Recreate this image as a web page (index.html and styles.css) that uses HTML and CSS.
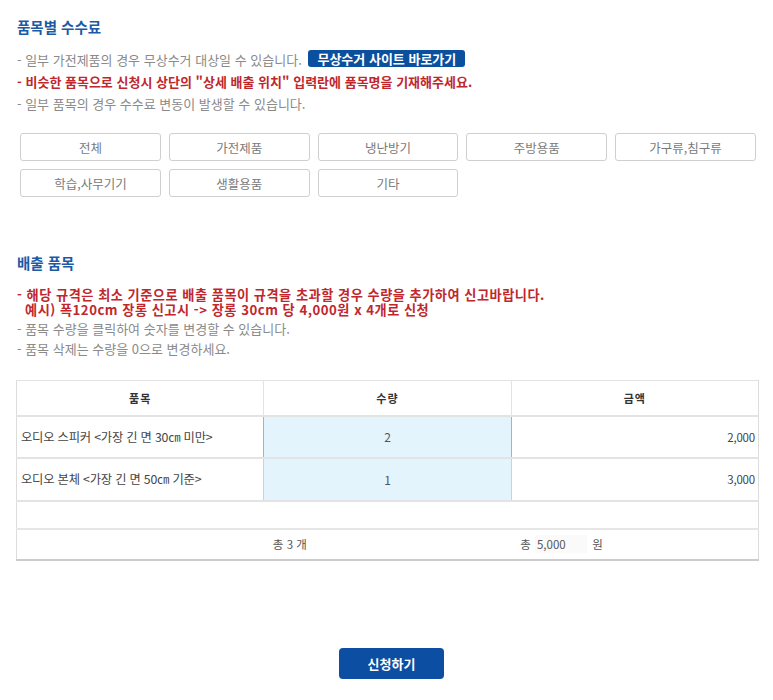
FILE: index.html
```html
<!DOCTYPE html>
<html lang="ko">
<head>
<meta charset="utf-8">
<title>품목별 수수료</title>
<link rel="stylesheet" href="styles.css">
</head>
<body>
<div class="wrap">
  <section class="fee">
    <h2 class="title">품목별 수수료</h2>
    <ul class="notes">
      <li class="gray">- 일부 가전제품의 경우 무상수거 대상일 수 있습니다. <a class="free-btn" href="#">무상수거 사이트 바로가기</a></li>
      <li class="red">- 비슷한 품목으로 신청시 상단의 "상세 배출 위치" 입력란에 품목명을 기재해주세요.</li>
      <li class="gray">- 일부 품목의 경우 수수료 변동이 발생할 수 있습니다.</li>
    </ul>
    <div class="cats">
      <button class="cat">전체</button>
      <button class="cat">가전제품</button>
      <button class="cat">냉난방기</button>
      <button class="cat">주방용품</button>
      <button class="cat">가구류,침구류</button>
      <button class="cat">학습,사무기기</button>
      <button class="cat">생활용품</button>
      <button class="cat">기타</button>
    </div>
  </section>

  <section class="items">
    <h2 class="title title2">배출 품목</h2>
    <div class="red-block">
      <p>- 해당 규격은 최소 기준으로 배출 품목이 규격을 초과할 경우 수량을 추가하여 신고바랍니다.</p>
      <p class="indent">예시) 폭120cm 장롱 신고시 -&gt; 장롱 30cm 당 4,000원 x 4개로 신청</p>
    </div>
    <ul class="notes2">
      <li>- 품목 수량을 클릭하여 숫자를 변경할 수 있습니다.</li>
      <li>- 품목 삭제는 수량을 0으로 변경하세요.</li>
    </ul>

    <table class="tbl">
      <thead>
        <tr class="head">
          <th>품목</th>
          <th>수량</th>
          <th>금액</th>
        </tr>
      </thead>
      <tbody>
        <tr class="row r1">
          <td class="name">오디오 스피커 &lt;가장 긴 면 30㎝ 미만&gt;</td>
          <td class="qty qty-active">2</td>
          <td class="amt">2,000</td>
        </tr>
        <tr class="row r2">
          <td class="name">오디오 본체 &lt;가장 긴 면 50㎝ 기준&gt;</td>
          <td class="qty">1</td>
          <td class="amt">3,000</td>
        </tr>
        <tr class="empty">
          <td colspan="3"></td>
        </tr>
        <tr class="total">
          <td></td>
          <td class="sum">총 3 개</td>
          <td class="sum">총 <span class="sum-input">5,000</span> 원</td>
        </tr>
      </tbody>
    </table>
  </section>

  <div class="submit-wrap">
    <button class="submit">신청하기</button>
  </div>
</div>
</body>
</html>
```

FILE: styles.css
```css
* { box-sizing: border-box; }
html, body { margin: 0; padding: 0; background: #fff; }
body {
  font-family: "Noto Sans CJK KR", "Noto Sans", sans-serif;
  color: #333;
}
.wrap {
  width: 773px;
  padding: 17px 14px 20px 17px;
}
.title {
  margin: 0;
  font-size: 14.5px;
  line-height: 20px;
  font-weight: 700;
  color: #1b5aa5;
}
.notes {
  list-style: none;
  margin: 12px 0 0;
  padding: 0;
  font-size: 13px;
  line-height: 22px;
}
.gray { color: #8a8a8a; }
.red { color: #c0272d; font-weight: 700; font-size: 13px; }
.free-btn {
  display: inline-block;
  vertical-align: 1px;
  margin-left: 3px;
  padding: 0 9px;
  height: 17px;
  line-height: 17px;
  border-radius: 3px;
  background: #0b4f9f;
  color: #fff;
  font-weight: 700;
  font-size: 13px;
  text-decoration: none;
}
.cats {
  margin: 18px 0 0 3px;
  width: 736px;
  display: grid;
  grid-template-columns: repeat(5, 1fr);
  column-gap: 8px;
  row-gap: 8px;
}
.cat {
  height: 28px;
  border: 1px solid #cfcfcf;
  border-radius: 3px;
  background: #fff;
  color: #7a7a7a;
  font-family: inherit;
  font-size: 12.5px;
  padding: 0;
}
.title2 { margin-top: 56px; }
.red-block {
  margin-top: 14px;
  color: #c0272d;
  font-weight: 700;
  font-size: 13.2px;
  letter-spacing: 0.5px;
  line-height: 15px;
}
.red-block p { margin: 0; }
.red-block .indent { padding-left: 8px; }
.notes2 {
  list-style: none;
  margin: 2px 0 0;
  padding: 0;
  color: #8a8a8a;
  font-size: 13px;
  line-height: 20px;
}
.tbl {
  margin: 21px 0 0 -1px;
  width: 743px;
  border-collapse: collapse;
  table-layout: fixed;
  font-size: 12.3px;
  color: #444;
  border-left: 1px solid #dcdcdc;
  border-right: 1px solid #dcdcdc;
  border-top: 1px solid #e3e3e3;
  border-bottom: 2px solid #cccccc;
}
.tbl th {
  height: 35px;
  font-weight: 700;
  font-size: 11px;
  letter-spacing: 1px;
  color: #333;
  border-bottom: 2px solid #e3e3e3;
  border-left: 1px solid #e3e3e3;
  padding: 0;
}
.tbl th:first-child { border-left: none; }
.row td {
  border-bottom: 2px solid #e3e3e3;
  padding: 0;
  letter-spacing: -0.2px;
}
.r1 td { height: 42px; }
.r2 td { height: 43px; }
.name { padding-left: 4px !important; text-align: left; }
.qty {
  text-align: center;
  background: #e3f4fc;
  border: 1px solid #bcd7e5;
  font-size: 12px;
  color: #555;
}
.qty-active { border-color: #9fb5c1; }
.amt { text-align: right; padding-right: 3px !important; font-size: 11.5px; }
.empty td {
  height: 28px;
  border-bottom: 2px solid #e6e6e6;
}
.total td { height: 31px; padding: 0; }
.sum {
  text-align: left;
  padding-left: 9px !important;
  font-size: 11.5px;
  color: #555;
}
.sum-input {
  display: inline-block;
  width: 52px;
  margin: 0 2px 0 1px;
  padding-left: 2px;
  background: #fafafa;
  line-height: 18px;
  font-size: 11.5px;
}
.submit-wrap {
  display: flex;
  justify-content: center;
  margin-top: 87px;
  padding-left: 7px;
}
.submit {
  width: 105px;
  height: 31px;
  border: none;
  border-radius: 4px;
  background: #0b4ea2;
  color: #fff;
  font-family: inherit;
  font-weight: 700;
  font-size: 13px;
}
```
